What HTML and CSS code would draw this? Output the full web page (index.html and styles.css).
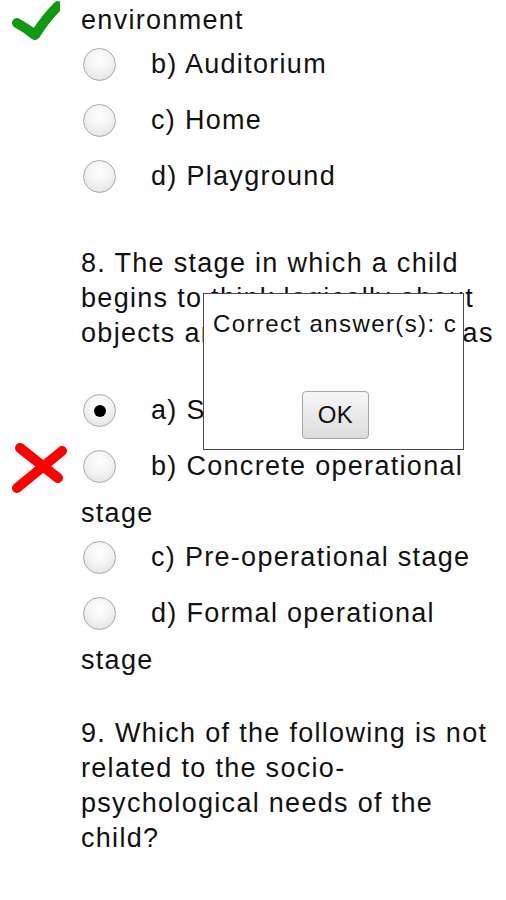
FILE: index.html
```html
<!DOCTYPE html>
<html>
<head>
<meta charset="utf-8">
<link rel="stylesheet" href="styles.css">
</head>
<body>
<div class="page">
  <div class="opt-cont">
    <svg class="mark check" width="60" height="44" viewBox="0 0 60 44"><path d="M17 23 C24 27 30 31 35 35 C42 24 50 14 58 6" fill="none" stroke="#0f9a12" stroke-width="10" stroke-linecap="round" stroke-linejoin="round"/></svg>
    environment
  </div>
  <div class="opt"><span class="radio"></span>b) Auditorium</div>
  <div class="opt"><span class="radio"></span>c) Home</div>
  <div class="opt"><span class="radio"></span>d) Playground</div>

  <p class="question">8. The stage in which a child begins to think logically about objects and events is known as</p>
  <div class="opt"><span class="radio checked"></span>a) Sensory-motor stage</div>
  <div class="opt">
    <svg class="mark cross" width="70" height="56" viewBox="0 0 70 56"><path d="M20 7 L58 37 M62 10 L17 47" fill="none" stroke="#ff0000" stroke-width="10" stroke-linecap="round"/></svg>
    <span class="radio"></span>b) Concrete operational stage</div>
  <div class="opt"><span class="radio"></span>c) Pre-operational stage</div>
  <div class="opt"><span class="radio"></span>d) Formal operational stage</div>

  <p class="question q9">9. Which of the following is not related to the socio-psychological needs of the child?</p>

  <div class="dialog">
    <div class="dialog-text">Correct answer(s): c</div>
    <div class="dialog-actions"><button class="ok">OK</button></div>
  </div>
</div>
</body>
</html>
```
FILE: styles.css
```css
html, body {
  margin: 0;
  padding: 0;
  background: #ffffff;
}
.page {
  position: relative;
  width: 506px;
  height: 900px;
  overflow: hidden;
  box-sizing: border-box;
  padding: 3px 8px 0 81px;
  font-family: "Liberation Sans", Arial, sans-serif;
  font-size: 27px;
  letter-spacing: 1.3px;
  line-height: 35px;
  color: #111111;
}
.opt-cont, .opt {
  position: relative;
}
.radio {
  display: inline-block;
  box-sizing: border-box;
  width: 33px;
  height: 33px;
  border-radius: 50%;
  border: 1px solid #a8a8a8;
  background: radial-gradient(circle at 50% 35%, #ffffff 0%, #f4f4f4 45%, #dcdcdc 100%);
  vertical-align: middle;
  margin: 10px 35px 13px 2px;
  position: relative;
  top: 0;
}
.radio.checked::after {
  content: "";
  position: absolute;
  left: 10px;
  top: 10px;
  width: 12px;
  height: 12px;
  border-radius: 50%;
  background: #000;
}
.mark {
  position: absolute;
}
.check {
  left: -81px;
  top: -3px;
}
.cross {
  left: -81px;
  top: 1px;
}
.question {
  margin: 40px 0 33px 0;
}
.q9 {
  margin-top: 38px;
}
.dialog {
  position: absolute;
  left: 203px;
  top: 293px;
  width: 261px;
  height: 157px;
  box-sizing: border-box;
  border: 1px solid #4a4a4a;
  background: #ffffff;
  letter-spacing: 1.4px;
}
.dialog-text {
  font-size: 24px;
  line-height: 30px;
  padding: 15px 0 0 9px;
  white-space: nowrap;
}
.dialog-actions {
  display: flex;
  justify-content: center;
  padding: 52px 0 0 4px;
}
.ok {
  width: 67px;
  height: 48px;
  border: 1px solid #a6a6a6;
  border-radius: 4px;
  background: linear-gradient(#f6f6f6, #dddddd);
  font-family: "Liberation Sans", Arial, sans-serif;
  font-size: 24px;
  letter-spacing: 0.5px;
  color: #111;
  padding: 0;
}
```
